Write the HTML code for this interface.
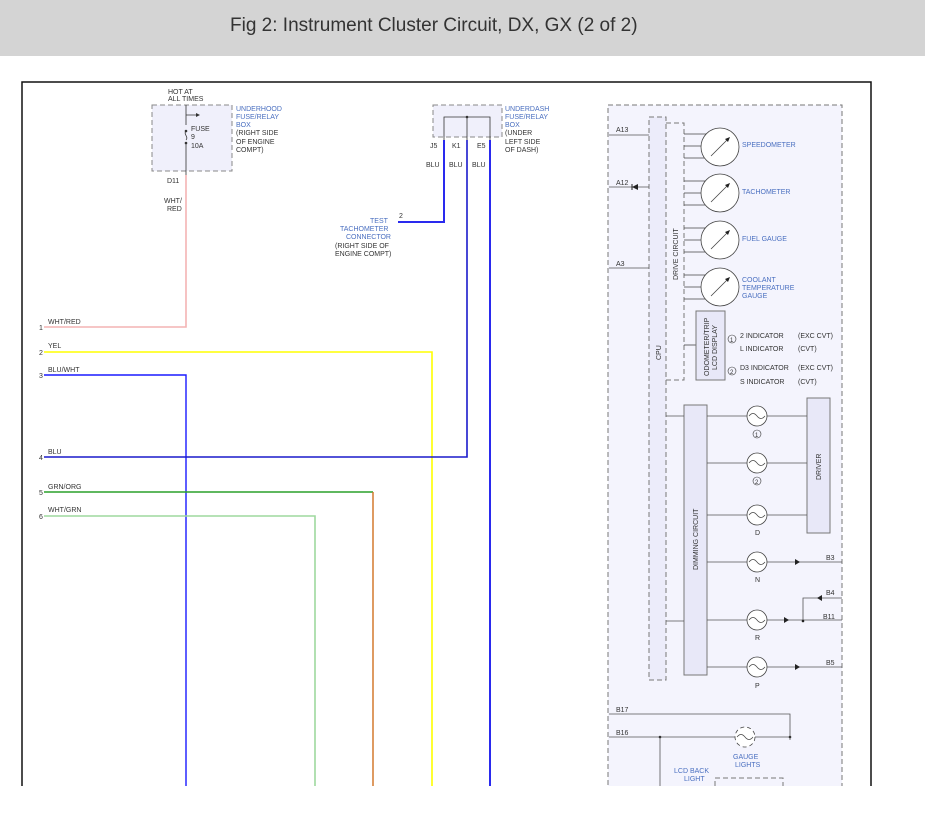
<!DOCTYPE html>
<html><head><meta charset="utf-8"><style>
body{margin:0;width:925px;height:816px;background:#fff;overflow:hidden;font-family:"Liberation Sans",sans-serif}
.hdr{position:absolute;left:0;top:0;width:925px;height:56px;background:#d4d4d4}
.hdr span{position:absolute;left:230px;top:15px;font-size:19px;color:#333;white-space:nowrap}
svg{position:absolute;left:0;top:0}
text{font-family:"Liberation Sans",sans-serif;font-size:7px;fill:#333}
.b{fill:#4a6fc0}
</style></head><body>
<div class="hdr"><span>Fig 2: Instrument Cluster Circuit, DX, GX (2 of 2)</span></div>
<svg width="925" height="816" viewBox="0 0 925 816">
<rect x="22" y="81" width="849" height="705" fill="#fff"/>
<path d="M22 786V82H871V786" fill="none" stroke="#111" stroke-width="1.5"/>
<rect x="152" y="105" width="80" height="66" fill="#f0f0fb" stroke="#888" stroke-dasharray="5,3"/>
<path d="M186 105V125M186 143V175M186 115H198" stroke="#333" fill="none" stroke-width="0.8"/>
<path d="M196 113L200 115L196 117Z" fill="#333"/>
<path d="M186 131C183 134 189 137 186 140" stroke="#333" fill="none" stroke-width="0.8"/>
<circle cx="186" cy="131" r="1.3" fill="#333"/><circle cx="186" cy="143" r="1.3" fill="#333"/>
<text x="168" y="94">HOT AT</text><text x="168" y="101">ALL TIMES</text>
<text x="191" y="131">FUSE</text><text x="191" y="139">9</text><text x="191" y="148">10A</text>
<text x="236" y="111" class="b">UNDERHOOD</text><text x="236" y="119" class="b">FUSE/RELAY</text><text x="236" y="127" class="b">BOX</text>
<text x="236" y="135">(RIGHT SIDE</text><text x="236" y="144">OF ENGINE</text><text x="236" y="152">COMPT)</text>
<text x="167" y="183">D11</text><text x="164" y="203">WHT/</text><text x="167" y="211">RED</text>
<rect x="433" y="105" width="69" height="32" fill="#f0f0fb" stroke="#888" stroke-dasharray="5,3"/>
<path d="M444 140V117H490V140M467 117V140" stroke="#333" fill="none" stroke-width="0.8"/>
<circle cx="467" cy="117" r="1.3" fill="#333"/>
<text x="505" y="111" class="b">UNDERDASH</text><text x="505" y="119" class="b">FUSE/RELAY</text><text x="505" y="127" class="b">BOX</text>
<text x="505" y="135">(UNDER</text><text x="505" y="144">LEFT SIDE</text><text x="505" y="152">OF DASH)</text>
<text x="430" y="148">J5</text><text x="452" y="148">K1</text><text x="477" y="148">E5</text>
<text x="426" y="167">BLU</text><text x="449" y="167">BLU</text><text x="472" y="167">BLU</text>
<text x="370" y="223" class="b">TEST</text><text x="340" y="231" class="b">TACHOMETER</text><text x="346" y="239" class="b">CONNECTOR</text>
<text x="335" y="248">(RIGHT SIDE OF</text><text x="335" y="256">ENGINE COMPT)</text><text x="399" y="218">2</text>
<path d="M186 175V327H44" stroke="#f4b4b4" stroke-width="1.6" fill="none"/>
<path d="M44 352H432V786" stroke="#ffff00" stroke-width="1.6" fill="none"/>
<path d="M44 375H186V786" stroke="#1a1aff" stroke-width="1.4" fill="none"/>
<path d="M44 457H467V140" stroke="#1a1acc" stroke-width="1.6" fill="none"/>
<path d="M444 140V222H398" stroke="#2a2aee" stroke-width="2" fill="none"/>
<path d="M490 140V786" stroke="#2a2aee" stroke-width="2" fill="none"/>
<path d="M44 492H373" stroke="#2aa02a" stroke-width="1.6" fill="none"/>
<path d="M373 492V786" stroke="#d07020" stroke-width="1.4" fill="none"/>
<path d="M44 516H315V786" stroke="#9ed89e" stroke-width="1.6" fill="none"/>
<text x="39" y="330">1</text><text x="48" y="324">WHT/RED</text>
<text x="39" y="355">2</text><text x="48" y="348">YEL</text>
<text x="39" y="378">3</text><text x="48" y="372">BLU/WHT</text>
<text x="39" y="460">4</text><text x="48" y="454">BLU</text>
<text x="39" y="495">5</text><text x="48" y="489">GRN/ORG</text>
<text x="39" y="519">6</text><text x="48" y="512">WHT/GRN</text>
<rect x="608" y="105" width="234" height="690" fill="#f4f4fd" stroke="#777" stroke-dasharray="5,3"/>
<rect x="649" y="117" width="17" height="563" fill="#ececfa" stroke="#777" stroke-dasharray="5,3"/>
<rect x="666" y="123" width="18" height="257" fill="none" stroke="#777" stroke-dasharray="5,3"/>
<text transform="translate(661,360) rotate(-90)">CPU</text>
<text transform="translate(678,280) rotate(-90)">DRIVE CIRCUIT</text>
<path d="M609 135H649M609 187H649M609 268H649" stroke="#555" fill="none" stroke-width="0.8"/>
<path d="M638 184L632 187L638 190Z" fill="#222"/><path d="M632 184V190" stroke="#222"/>
<text x="616" y="132">A13</text><text x="616" y="185">A12</text><text x="616" y="266">A3</text>
<g stroke="#444" fill="none" stroke-width="0.8">
<path d="M684 134H706M684 146H702M684 158H706"/><circle cx="720" cy="147" r="19" fill="#fff"/><path d="M711 156L729 138"/>
<path d="M684 181H706M684 193H702M684 205H706"/><circle cx="720" cy="193" r="19" fill="#fff"/><path d="M711 202L729 184"/>
<path d="M684 228H706M684 240H702M684 252H706"/><circle cx="720" cy="240" r="19" fill="#fff"/><path d="M711 249L729 231"/>
<path d="M684 275H706M684 287H702M684 299H706"/><circle cx="720" cy="287" r="19" fill="#fff"/><path d="M711 296L729 278"/>
<path d="M684 345H696"/>
</g>
<g fill="#222"><path d="M730 137L728 142L725 139Z"/><path d="M730 183L728 188L725 185Z"/><path d="M730 230L728 235L725 232Z"/><path d="M730 277L728 282L725 279Z"/></g>
<text x="742" y="147" class="b">SPEEDOMETER</text><text x="742" y="194" class="b">TACHOMETER</text><text x="742" y="241" class="b">FUEL GAUGE</text>
<text x="742" y="282" class="b">COOLANT</text><text x="742" y="290" class="b">TEMPERATURE</text><text x="742" y="298" class="b">GAUGE</text>
<rect x="696" y="311" width="29" height="69" fill="#e8e8f8" stroke="#777"/>
<text transform="translate(709,376) rotate(-90)">ODOMETER/TRIP</text><text transform="translate(717,370) rotate(-90)">LCD DISPLAY</text>
<circle cx="732" cy="339" r="4" fill="none" stroke="#333" stroke-width="0.6"/><text x="730" y="342" style="font-size:6px">1</text>
<circle cx="732" cy="371" r="4" fill="none" stroke="#333" stroke-width="0.6"/><text x="730" y="374" style="font-size:6px">2</text>
<text x="740" y="338">2 INDICATOR</text><text x="798" y="338">(EXC CVT)</text>
<text x="740" y="351">L INDICATOR</text><text x="798" y="351">(CVT)</text>
<text x="740" y="370">D3 INDICATOR</text><text x="798" y="370">(EXC CVT)</text>
<text x="740" y="384">S INDICATOR</text><text x="798" y="384">(CVT)</text>
<rect x="684" y="405" width="23" height="270" fill="#e8e8f8" stroke="#777"/>
<text transform="translate(698,570) rotate(-90)">DIMMING CIRCUIT</text>
<rect x="807" y="398" width="23" height="135" fill="#e8e8f8" stroke="#777"/>
<text transform="translate(821,480) rotate(-90)">DRIVER</text>
<g stroke="#555" fill="none" stroke-width="0.8">
<path d="M666 416H684M666 621H684"/>
<path d="M707 416H807M707 463H807M707 515H807M707 562H842M707 620H842M707 667H842M803 620V598H842"/>
</g>
<g fill="#fff" stroke="#444" stroke-width="0.8">
<circle cx="757" cy="416" r="10"/><circle cx="757" cy="463" r="10"/><circle cx="757" cy="515" r="10"/>
<circle cx="757" cy="562" r="10"/><circle cx="757" cy="620" r="10"/><circle cx="757" cy="667" r="10"/>
</g>
<g stroke="#444" fill="none" stroke-width="0.7">
<path d="M749 416q4-5 8 0q4 5 8 0M749 463q4-5 8 0q4 5 8 0M749 515q4-5 8 0q4 5 8 0M749 562q4-5 8 0q4 5 8 0M749 620q4-5 8 0q4 5 8 0M749 667q4-5 8 0q4 5 8 0"/>
</g>
<g fill="#222"><path d="M795 559L800 562L795 565Z"/><path d="M784 617L789 620L784 623Z"/><path d="M822 595L817 598L822 601Z"/><path d="M795 664L800 667L795 670Z"/><circle cx="803" cy="621" r="1.3"/></g>
<circle cx="757" cy="434" r="4" fill="none" stroke="#333" stroke-width="0.6"/><text x="755" y="437" style="font-size:6px">1</text>
<circle cx="757" cy="481" r="4" fill="none" stroke="#333" stroke-width="0.6"/><text x="755" y="484" style="font-size:6px">2</text>
<text x="755" y="535">D</text><text x="755" y="582">N</text><text x="755" y="640">R</text><text x="755" y="688">P</text>
<text x="826" y="560">B3</text><text x="826" y="595">B4</text><text x="823" y="619">B11</text><text x="826" y="665">B5</text>
<path d="M609 714H790V740M609 737H790" stroke="#555" fill="none" stroke-width="0.8"/>
<path d="M660 737V786" stroke="#555" stroke-width="0.8"/>
<circle cx="660" cy="737" r="1.3" fill="#333"/><circle cx="790" cy="737" r="1.3" fill="#333"/>
<circle cx="745" cy="737" r="10" fill="#fff" stroke="#444" stroke-width="0.8" stroke-dasharray="4,3"/>
<path d="M737 737q4-5 8 0q4 5 8 0" stroke="#444" fill="none" stroke-width="0.7"/>
<text x="616" y="712">B17</text><text x="616" y="735">B16</text>
<text x="733" y="759" class="b">GAUGE</text><text x="735" y="767" class="b">LIGHTS</text>
<text x="674" y="773" class="b">LCD BACK</text><text x="684" y="781" class="b">LIGHT</text>
<rect x="715" y="778" width="68" height="20" fill="none" stroke="#777" stroke-dasharray="5,3"/>
<rect x="0" y="786" width="925" height="30" fill="#fff"/>
</svg>
</body></html>
